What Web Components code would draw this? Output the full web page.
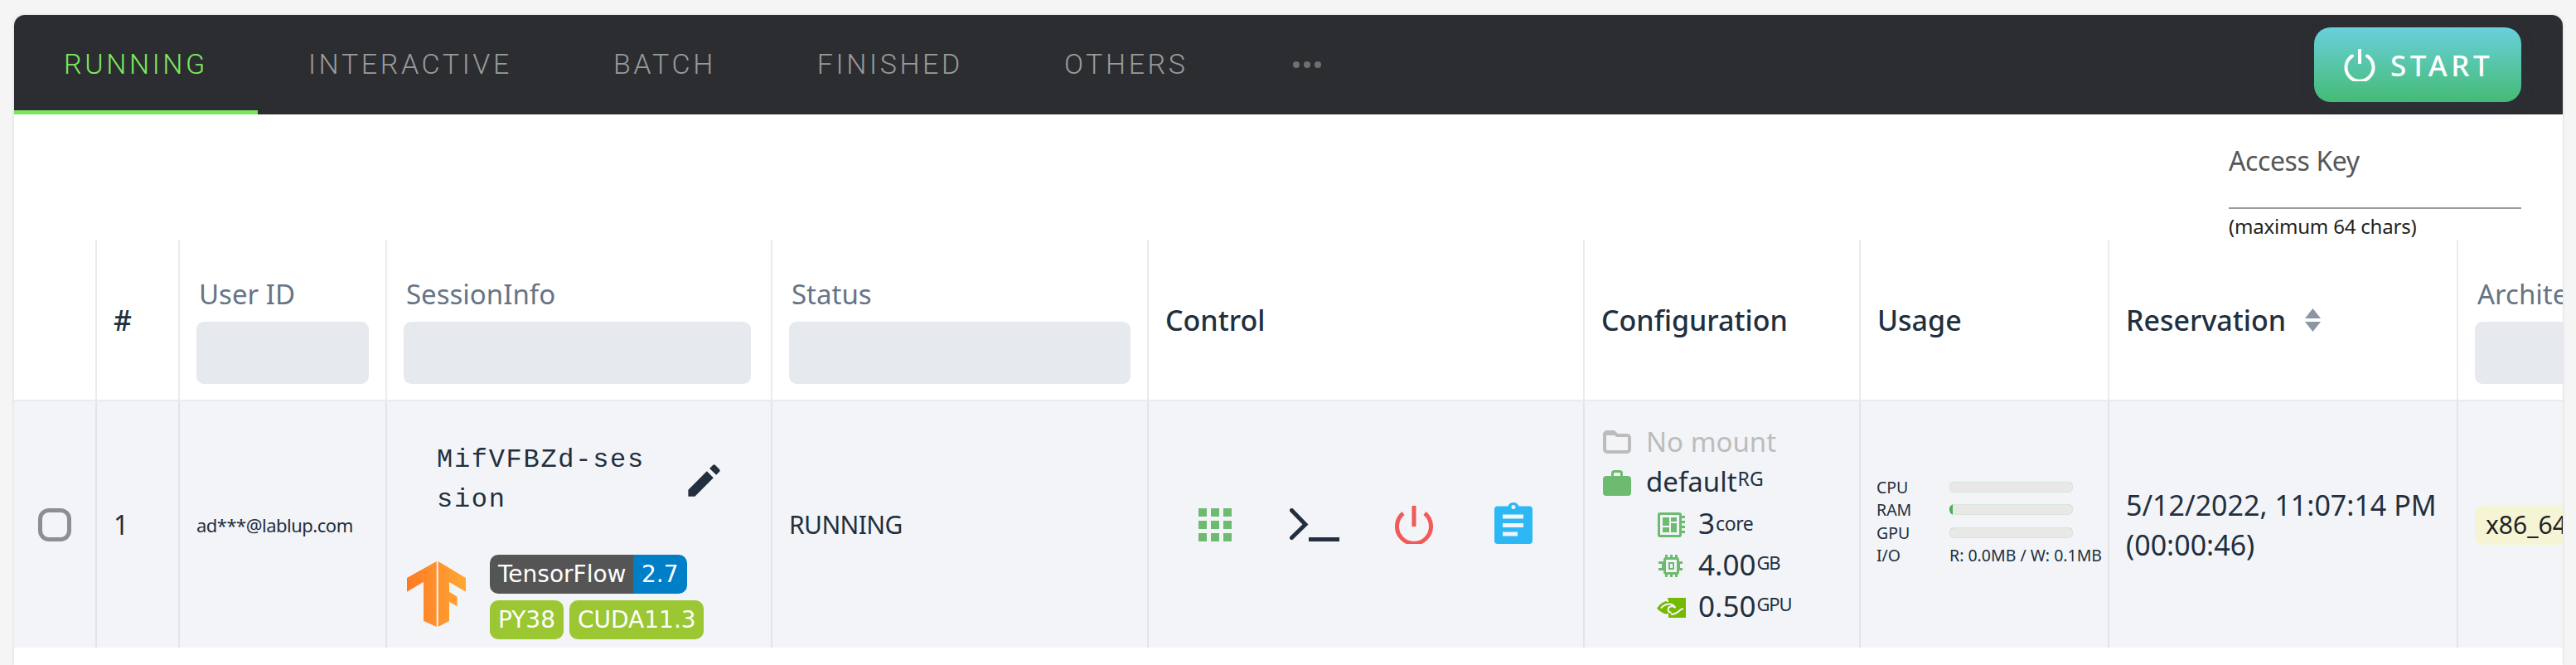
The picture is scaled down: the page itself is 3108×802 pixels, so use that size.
<!DOCTYPE html>
<html>
<head>
<meta charset="utf-8">
<title>Sessions</title>
<style>
  html, body { margin: 0; background: #f5f5f5; overflow: hidden; height: 100%; }
  body { font-family: "Noto Sans", sans-serif; color: #222f3e; }
</style>
</head>
<body>
<session-panel>
  <session-tabs slot="tabs">
    <tab-item active>RUNNING</tab-item>
    <tab-item>INTERACTIVE</tab-item>
    <tab-item>BATCH</tab-item>
    <tab-item>FINISHED</tab-item>
    <tab-item>OTHERS</tab-item>
    <tab-item dots><svg width="34" height="8" viewBox="0 0 34 8" fill="#6f6f6f"><circle cx="4" cy="4" r="4"/><circle cx="17" cy="4" r="4"/><circle cx="30" cy="4" r="4"/></svg></tab-item>
    <start-button slot="action"></start-button>
  </session-tabs>
  <access-key-field></access-key-field>
  <session-table>
    <head-cell></head-cell>
    <head-cell strong>#</head-cell>
    <head-cell filter>User ID</head-cell>
    <head-cell filter style="--filter-gap:4px">SessionInfo</head-cell>
    <head-cell filter>Status</head-cell>
    <head-cell strong>Control</head-cell>
    <head-cell strong>Configuration</head-cell>
    <head-cell strong>Usage</head-cell>
    <head-cell strong sortable>Reservation</head-cell>
    <head-cell filter>Architecture</head-cell>

    <row-cell center><round-check></round-check></row-cell>
    <row-cell style="font-size:32px">1</row-cell>
    <row-cell style="font-size:22px;letter-spacing:-0.5px">ad***@lablup.com</row-cell>
    <row-cell flush><session-info></session-info></row-cell>
    <row-cell style="font-size:30px;letter-spacing:-0.6px">RUNNING</row-cell>
    <row-cell flush><control-icons></control-icons></row-cell>
    <row-cell flush><config-info></config-info></row-cell>
    <row-cell flush><usage-info></usage-info></row-cell>
    <row-cell style="font-size:34px;line-height:48px">5/12/2022, 11:07:14 PM<br>(00:00:46)</row-cell>
    <row-cell><arch-tag>x86_64</arch-tag></row-cell>
  </session-table>
</session-panel>

<script>
  class SessionPanel extends HTMLElement {
    constructor() {
      super()
      this.attachShadow({ mode: 'open' })
      this.shadowRoot.innerHTML = `
        <style>
          :host {
            display: block;
            margin: 18px 16px 0 17px;
            height: 784px;
            background: #fff;
            border-radius: 13px 13px 0 0;
            overflow: hidden;
            box-shadow: 0 0 4px rgba(0, 0, 0, 0.12);
          }
        </style>
        <slot name="tabs"></slot>
        <slot></slot>
      `
    }
  }

  class SessionTabs extends HTMLElement {
    constructor() {
      super()
      this.attachShadow({ mode: 'open' })
      this.shadowRoot.innerHTML = `
        <style>
          :host {
            display: flex;
            height: 120px;
            background: #2c2d31;
            justify-content: space-between;
          }
          .tabs { display: flex; }
          .action { padding: 15px 50px 0 0; }
        </style>
        <div class="tabs"><slot></slot></div>
        <div class="action"><slot name="action"></slot></div>
      `
    }
  }

  class TabItem extends HTMLElement {
    constructor() {
      super()
      this.attachShadow({ mode: 'open' })
      this.shadowRoot.innerHTML = `
        <style>
          :host {
            display: block;
            box-sizing: border-box;
            height: 120px;
            padding: 0 61px;
            font: 300 34px/118px Roboto, sans-serif;
            letter-spacing: 3.6px;
            color: #9a9a9a;
            border-bottom: 5px solid transparent;
          }
          :host([active]) { padding: 0 60px; color: #7ee85f; border-bottom-color: #7ce55f; }
          :host([dots]) { display: flex; align-items: center; padding: 5px 0 0 65px; }
        </style>
        <slot></slot>
      `
    }
  }

  class StartButton extends HTMLElement {
    constructor() {
      super()
      this.attachShadow({ mode: 'open' })
      this.shadowRoot.innerHTML = `
        <style>
          :host {
            display: flex;
            align-items: center;
            box-sizing: border-box;
            width: 250px;
            height: 90px;
            padding-left: 36px;
            border-radius: 20px;
            background: linear-gradient(180deg, #69d0dc, #45bb75);
            box-shadow: 0 6px 20px rgba(60, 70, 110, 0.12);
            color: #fff;
            font: 500 35px "Noto Sans", sans-serif;
            letter-spacing: 4.6px;
          }
          svg { width: 38px; height: 40px; margin-right: 18px; }
        </style>
        <svg viewBox="0 0 38 40" fill="none" stroke="#fff" stroke-width="4">
          <path d="M10 9.5a16.5 16.5 0 1 0 18 0" stroke-linecap="round"/>
          <path d="M19 1v18"/>
        </svg>
        <span>START</span>
      `
    }
  }

  class AccessKeyField extends HTMLElement {
    constructor() {
      super()
      this.attachShadow({ mode: 'open' })
      this.shadowRoot.innerHTML = `
        <style>
          :host { display: flex; justify-content: flex-end; height: 151px; padding-right: 50px; }
          .field { width: 353px; padding-top: 34px; }
          .label { font-size: 32px; line-height: 44px; height: 78px; color: #55575a; border-bottom: 2px solid #9a9b9e; letter-spacing: -0.4px; }
          .hint { font-size: 24px; line-height: 36px; margin-top: 3px; color: #222; letter-spacing: -0.2px; }
        </style>
        <div class="field">
          <div class="label">Access Key</div>
          <div class="hint">(maximum 64 chars)</div>
        </div>
      `
    }
  }

  class SessionTable extends HTMLElement {
    constructor() {
      super()
      this.attachShadow({ mode: 'open' })
      this.shadowRoot.innerHTML = `
        <style>
          :host {
            display: grid;
            width: 3200px;
            grid-template-columns: 98px 100px 250px 465px 454px 526px 333px 300px 421px 240px;
            grid-template-rows: 195px 297px;
          }
        </style>
        <slot></slot>
      `
    }
  }

  class HeadCell extends HTMLElement {
    constructor() {
      super()
      this.attachShadow({ mode: 'open' })
      const filter = this.hasAttribute('filter')
      const sortable = this.hasAttribute('sortable')
      this.shadowRoot.innerHTML = `
        <style>
          :host {
            display: flex;
            box-sizing: border-box;
            flex-direction: column;
            justify-content: center;
            padding: 0 20px;
            border-left: 2px solid #e9ebef;
            border-bottom: 2px solid #e9ebef;
            font-size: 33px;
            color: #667486;
            white-space: nowrap;
          }
          :host(:first-child) { border-left: 0; }
          :host([strong]) { color: #222f3e; font-weight: 500; font-size: 34px; }
          :host([filter]) { justify-content: flex-end; padding-bottom: 19px; }
          .label { display: flex; align-items: center; line-height: 44px; }
          :host([filter]) .label { margin: 0 0 11px 3px; }
          .filter { height: 75px; background: #e6e9ed; border-radius: 9px; margin-right: var(--filter-gap, 0); }
          svg { width: 19px; height: 28px; margin-left: 23px; }
        </style>
        <div class="label"><slot></slot>${sortable ? '<svg viewBox="0 0 19 28" fill="#8b95a3"><path d="M9.5 0L19 12H0zM9.5 28L0 16h19z"/></svg>' : ''}</div>
        ${filter ? '<div class="filter"></div>' : ''}
      `
    }
  }

  class RowCell extends HTMLElement {
    constructor() {
      super()
      this.attachShadow({ mode: 'open' })
      this.shadowRoot.innerHTML = `
        <style>
          :host {
            display: flex;
            box-sizing: border-box;
            align-items: center;
            padding: 0 20px;
            border-left: 2px solid #e1e4e9;
            background: #f3f4f7;
            color: #222f3e;
            white-space: nowrap;
          }
          :host([center]) { justify-content: center; padding: 0; border-left: 0; }
          :host([flush]) { padding: 0; align-items: stretch; }
        </style>
        <div><slot></slot></div>
      `
    }
  }

  class RoundCheck extends HTMLElement {
    constructor() {
      super()
      this.attachShadow({ mode: 'open' })
      this.shadowRoot.innerHTML = `
        <style>
          :host {
            display: block;
            box-sizing: border-box;
            width: 40px;
            height: 40px;
            border: 5px solid #8a8f93;
            border-radius: 13px;
          }
        </style>
      `
    }
  }

  class SessionInfo extends HTMLElement {
    constructor() {
      super()
      this.attachShadow({ mode: 'open' })
      this.shadowRoot.innerHTML = `
        <style>
          :host {
            display: flex;
            box-sizing: border-box;
            flex-direction: column;
            justify-content: space-between;
            width: 463px;
            height: 297px;
            padding: 47px 0 10px 20px;
          }
          .name { display: flex; align-items: center; padding-left: 40px; }
          .text {
            width: 260px;
            white-space: normal;
            word-break: break-all;
            font: 32px/48px "Liberation Mono", monospace;
            letter-spacing: 1.7px;
          }
          .pencil { width: 51px; height: 51px; margin-left: 37px; }
          .kernel { display: flex; align-items: center; padding-left: 4px; }
          .logo { width: 71px; height: 79px; margin: 0 29px 7px 0; }
          .badges { display: flex; flex-direction: column; gap: 8px; }
          .line { display: flex; gap: 7px; font: 28px/47px "DejaVu Sans", sans-serif; color: #fff; }
          .line span { display: block; height: 47px; padding: 0 10px; border-radius: 10px; background: #9bc733; }
          .joined { display: flex; }
          .line .dark { background: #555; border-radius: 10px 0 0 10px; width: 153px; }
          .line .blue { background: #007ec6; border-radius: 0 10px 10px 0; width: 45px; }
          .py { width: 69px; }
          .cuda { width: 142px; }
        </style>
        <div class="name">
          <div class="text">MifVFBZd-session</div>
          <svg class="pencil" viewBox="0 0 24 24" fill="#222f3e"><path d="M3 17.25V21h3.75L17.3 10.45l-3.75-3.75L3 17.25zM20.71 7.04a1 1 0 0 0 0-1.41l-2.34-2.34a1 1 0 0 0-1.41 0l-1.83 1.83 3.75 3.75 1.83-1.83z"/></svg>
        </div>
        <div class="kernel">
          <svg class="logo" viewBox="0 0 71 79">
            <defs><linearGradient id="tf"><stop offset="0" stop-color="#ff7a25"/><stop offset="1" stop-color="#ffa733"/></linearGradient></defs>
            <path fill="url(#tf)" d="M35.7 0L0 20v16.7L20 25v46.7L35.7 79zM37.7 0L71 20v16.7L51 25v11.7l9.7 6v11.6L51 48.7v23L37.7 79z"/>
          </svg>
          <div class="badges">
            <div class="line"><div class="joined"><span class="dark">TensorFlow</span><span class="blue">2.7</span></div></div>
            <div class="line"><span class="py">PY38</span><span class="cuda">CUDA11.3</span></div>
          </div>
        </div>
      `
    }
  }

  class ControlIcons extends HTMLElement {
    constructor() {
      super()
      this.attachShadow({ mode: 'open' })
      const cells = []
      for (const y of [0, 15, 30]) {
        for (const x of [0, 15, 30]) cells.push(`<rect x="${x}" y="${y}" width="10" height="10"/>`)
      }
      this.shadowRoot.innerHTML = `
        <style>
          :host { display: flex; align-items: center; padding-left: 20px; height: 297px; }
          div { width: 120px; display: flex; justify-content: center; }
        </style>
        <div><svg width="40" height="40" viewBox="0 0 40 40" fill="#6dbb70">${cells.join('')}</svg></div>
        <div><svg width="60" height="40" viewBox="0 0 60 40" fill="none" stroke="#222f3e" stroke-width="5">
          <path d="M2.5 2.5L19 19.5 2.5 35.5" stroke-linecap="round"/>
          <path d="M23 37.5h37"/>
        </svg></div>
        <div><svg width="46" height="46" viewBox="0 0 46 46" fill="none" stroke="#f05a58" stroke-width="5">
          <path d="M10 9a20.5 20.5 0 1 0 26 0"/>
          <path d="M23 0v25"/>
        </svg></div>
        <div style="margin-top:-4px"><svg width="46" height="51" viewBox="0 0 46 51" fill="#2db7f5">
          <path fill-rule="evenodd" d="M4 5.5h12.5a7 7 0 0 1 13 0H42a4 4 0 0 1 4 4V47a4 4 0 0 1-4 4H4a4 4 0 0 1-4-4V9.5a4 4 0 0 1 4-4zM23 4a2.5 2.5 0 1 0 0 5 2.5 2.5 0 0 0 0-5zM10 15.5v5h25v-5zM10 26v5h25v-5zM10 36.5v5h18v-5z"/>
        </svg></div>
      `
    }
  }

  class ConfigInfo extends HTMLElement {
    constructor() {
      super()
      this.attachShadow({ mode: 'open' })
      this.shadowRoot.innerHTML = `
        <style>
          :host { display: flex; flex-direction: column; justify-content: center; padding-left: 22px; height: 297px; }
          .row { display: flex; align-items: center; height: 50px; font-size: 33px; line-height: 50px; }
          .row svg { flex: none; }
          .top svg { width: 34px; margin-right: 18px; }
          .muted { color: #bcbcbc; }
          .sub { padding-left: 65px; font-size: 35px; }
          .sub .ic { width: 35px; margin-right: 15px; display: flex; justify-content: center; }
          small { font-size: 22px; position: relative; top: -7px; margin-left: 1px; letter-spacing: -1.2px; }
          .rg { font-size: 23px; letter-spacing: 0; }
          .core { font-size: 23px; top: -4px; letter-spacing: -0.4px; }
        </style>
        <div class="row top muted">
          <svg height="28" viewBox="0 0 34 28" fill="none" stroke="#bcbcbc" stroke-width="4"><path d="M2 5a3 3 0 0 1 3-3h8l4 4h12a3 3 0 0 1 3 3v14a3 3 0 0 1-3 3H5a3 3 0 0 1-3-3z" stroke-linejoin="round"/><path d="M2 2h11l4 4H2z" fill="#bcbcbc" stroke="none"/></svg>
          <span>No mount</span>
        </div>
        <div class="row top">
          <svg height="31" viewBox="0 0 34 31" fill="#6dbb70"><path fill-rule="evenodd" d="M10 7V4a4 4 0 0 1 4-4h6a4 4 0 0 1 4 4v3h6a4 4 0 0 1 4 4v16a4 4 0 0 1-4 4H4a4 4 0 0 1-4-4V11a4 4 0 0 1 4-4zM13 7h8V4a1 1 0 0 0-1-1h-6a1 1 0 0 0-1 1z"/></svg>
          <span>default<small class="rg">RG</small></span>
        </div>
        <div class="row sub">
          <div class="ic"><svg width="33" height="30" viewBox="0 0 33 30" fill="#6dbb70"><path fill-rule="evenodd" d="M3 0h23a3 3 0 0 1 3 3v1h4v3h-4v3h4v3h-4v3h4v3h-4v3h4v3h-4v2a3 3 0 0 1-3 3H3a3 3 0 0 1-3-3V3a3 3 0 0 1 3-3zM3 3v24h23V3zM6 6h8v10H6zM6 18h8v6H6zM16 6h7v5h-7zM16 13h7v11h-7z"/></svg></div>
          <span>3<small class="core">core</small></span>
        </div>
        <div class="row sub">
          <div class="ic"><svg width="31" height="27" viewBox="0 0 31 27" fill="#6dbb70"><path fill-rule="evenodd" d="M8 0h3v3h3V0h3v3h3V0h3v3a3 3 0 0 1 2 2.5V8h4v3h-3v5h3v3h-4v2.5a3 3 0 0 1-2 2.5v3h-3v-3h-3v3h-3v-3h-3v3H8v-3a3 3 0 0 1-2-2.5V19H0v-3h4v-5H0V8h6V5.5A3 3 0 0 1 8 3zM9 6v15h13V6zM12 9h7v9h-7zM14 11v5h3v-5z"/></svg></div>
          <span>4.00<small>GB</small></span>
        </div>
        <div class="row sub">
          <div class="ic"><svg width="35" height="24" viewBox="0 0 35 24">
            <rect x="13" width="22" height="24" fill="#76b900"/>
            <path fill="#76b900" d="M0 12.5C5 6 10 3.5 15 3.5s9 2.5 13 8c-3 5-8 8.5-13 8.5S5 18 0 12.5z"/>
            <path fill="none" stroke="#f3f4f7" stroke-width="2" d="M5 12.5C8 9 11 7.5 15 7.5s6 2 7.5 4.5c-2-1.5-4-2-6-1.5-2 .5-3 2-3 3.5 0 2 2 3.5 4 4M13 2v3M13 19v5h-2"/>
            <path fill="none" stroke="#f3f4f7" stroke-width="2" d="M17 20c4 0 8-2 12-6l3-1"/>
          </svg></div>
          <span>0.50<small>GPU</small></span>
        </div>
      `
    }
  }

  class UsageInfo extends HTMLElement {
    constructor() {
      super()
      this.attachShadow({ mode: 'open' })
      const bar = (name, fill) => `
        <div class="row"><span class="k">${name}</span><span class="bar"><i style="width:${fill}px"></i></span></div>`
      this.shadowRoot.innerHTML = `
        <style>
          :host { display: flex; flex-direction: column; justify-content: center; padding: 0 0 8px 19px; height: 297px; box-sizing: border-box; }
          .row { display: flex; align-items: center; height: 27.5px; font-size: 19.5px; color: #222f3e; }
          .k { width: 88px; }
          .bar { display: block; width: 149px; height: 13px; border-radius: 6px; background: #e8e8e8; box-shadow: inset 0 0 0 1px #d8e6d8, inset 0 1px 0 #b8dab8; overflow: hidden; }
          i { display: block; height: 13px; background: #4caf50; }
        </style>
        ${bar('CPU', 0)}
        ${bar('RAM', 4)}
        ${bar('GPU', 0)}
        <div class="row"><span class="k">I/O</span><span>R: 0.0MB / W: 0.1MB</span></div>
      `
    }
  }

  class ArchTag extends HTMLElement {
    constructor() {
      super()
      this.attachShadow({ mode: 'open' })
      this.shadowRoot.innerHTML = `
        <style>
          :host {
            display: block;
            height: 48px;
            padding: 0 13px;
            border-radius: 10px;
            background: #f5f5d5;
            color: #222;
            font-size: 30px;
            line-height: 48px;
          }
        </style>
        <slot></slot>
      `
    }
  }

  customElements.define('session-panel', SessionPanel)
  customElements.define('session-tabs', SessionTabs)
  customElements.define('tab-item', TabItem)
  customElements.define('start-button', StartButton)
  customElements.define('access-key-field', AccessKeyField)
  customElements.define('session-table', SessionTable)
  customElements.define('head-cell', HeadCell)
  customElements.define('row-cell', RowCell)
  customElements.define('round-check', RoundCheck)
  customElements.define('session-info', SessionInfo)
  customElements.define('control-icons', ControlIcons)
  customElements.define('config-info', ConfigInfo)
  customElements.define('usage-info', UsageInfo)
  customElements.define('arch-tag', ArchTag)
</script>
</body>
</html>
